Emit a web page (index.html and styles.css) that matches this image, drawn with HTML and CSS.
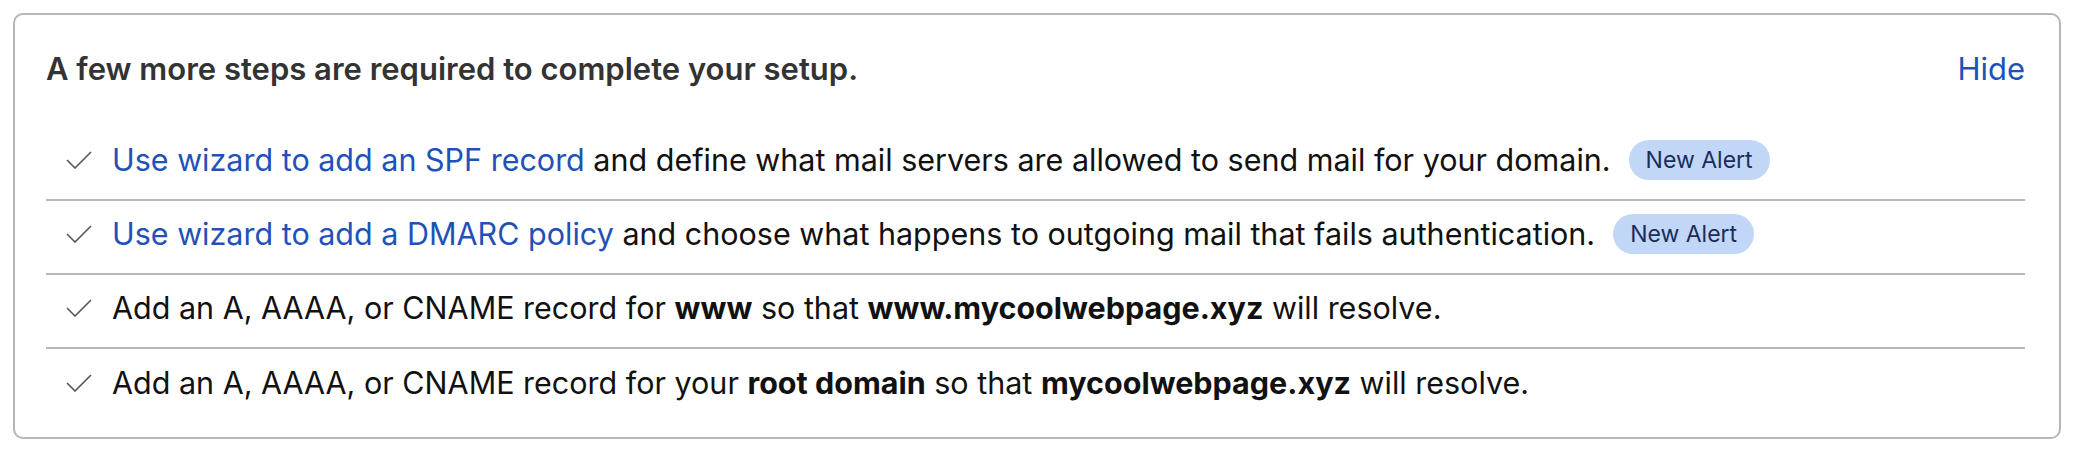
FILE: index.html
```html
<!DOCTYPE html>
<html lang="en">
<head>
<meta charset="utf-8">
<link rel="stylesheet" href="styles.css">
</head>
<body>
<div class="page">
  <section class="setup">
    <header class="setup-head">
      <h2 class="setup-title">A few more steps are required to complete your setup.</h2>
      <a class="hide-link" href="#">Hide</a>
    </header>
    <ul class="steps">
      <li class="step">
        <svg class="check" viewBox="0 0 26 18" width="26" height="18"><polyline points="1,9 9,17 25,1" /></svg>
        <span class="step-text"><a class="link" href="#">Use wizard to add an SPF record</a> and define what mail servers are allowed to send mail for your domain.</span>
        <span class="badge">New Alert</span>
      </li>
      <li class="step">
        <svg class="check" viewBox="0 0 26 18" width="26" height="18"><polyline points="1,9 9,17 25,1" /></svg>
        <span class="step-text"><a class="link" href="#">Use wizard to add a DMARC policy</a> and choose what happens to outgoing mail that fails authentication.</span>
        <span class="badge">New Alert</span>
      </li>
      <li class="step">
        <svg class="check" viewBox="0 0 26 18" width="26" height="18"><polyline points="1,9 9,17 25,1" /></svg>
        <span class="step-text">Add an A, AAAA, or CNAME record for <b>www</b> so that <b>www.mycoolwebpage.xyz</b> will resolve.</span>
      </li>
      <li class="step">
        <svg class="check" viewBox="0 0 26 18" width="26" height="18"><polyline points="1,9 9,17 25,1" /></svg>
        <span class="step-text">Add an A, AAAA, or CNAME record for your <b>root domain</b> so that <b>mycoolwebpage.xyz</b> will resolve.</span>
      </li>
    </ul>
  </section>
</div>
</body>
</html>
```

FILE: styles.css
```css
* { box-sizing: border-box; }
html, body { margin: 0; padding: 0; background: #ffffff; }
body { font-family: Inter, "Noto Sans", "Liberation Sans", sans-serif; color: #111; }

.page { padding: 13px; }

.setup {
  border: 2px solid #b6b6b6;
  border-radius: 10px;
  padding: 36px 34px 14px 31px;
}

.setup-head {
  display: flex;
  justify-content: space-between;
  align-items: baseline;
  height: 76px;
}

.setup-title {
  margin: 0;
  font-size: 31px;
  line-height: 36px;
  font-weight: 600;
  color: #333333;
}

.hide-link {
  font-size: 31px;
  line-height: 36px;
  color: #1f52b8;
  text-decoration: none;
}

.steps { list-style: none; margin: 0; padding: 0; }

.step {
  display: flex;
  align-items: center;
  height: 74px;
  padding: 0 0 6px 20px;
  border-bottom: 2px solid #b8b8b8;
  font-size: 30.5px;
  line-height: 36px;
}
.step:last-child { border-bottom: none; }

.check {
  flex: none;
  fill: none;
  stroke: #555555;
  stroke-width: 1.6;
  margin-right: 20px;
}

.step-text { white-space: nowrap; }

.step-text b { font-weight: 700; }

.link { color: #1f52b8; text-decoration: none; }

.badge {
  margin-left: 18px;
  padding: 0 17px;
  height: 40px;
  line-height: 40px;
  border-radius: 20px;
  background: #c2d7f7;
  color: #1a2d5a;
  font-size: 23px;
}
```
